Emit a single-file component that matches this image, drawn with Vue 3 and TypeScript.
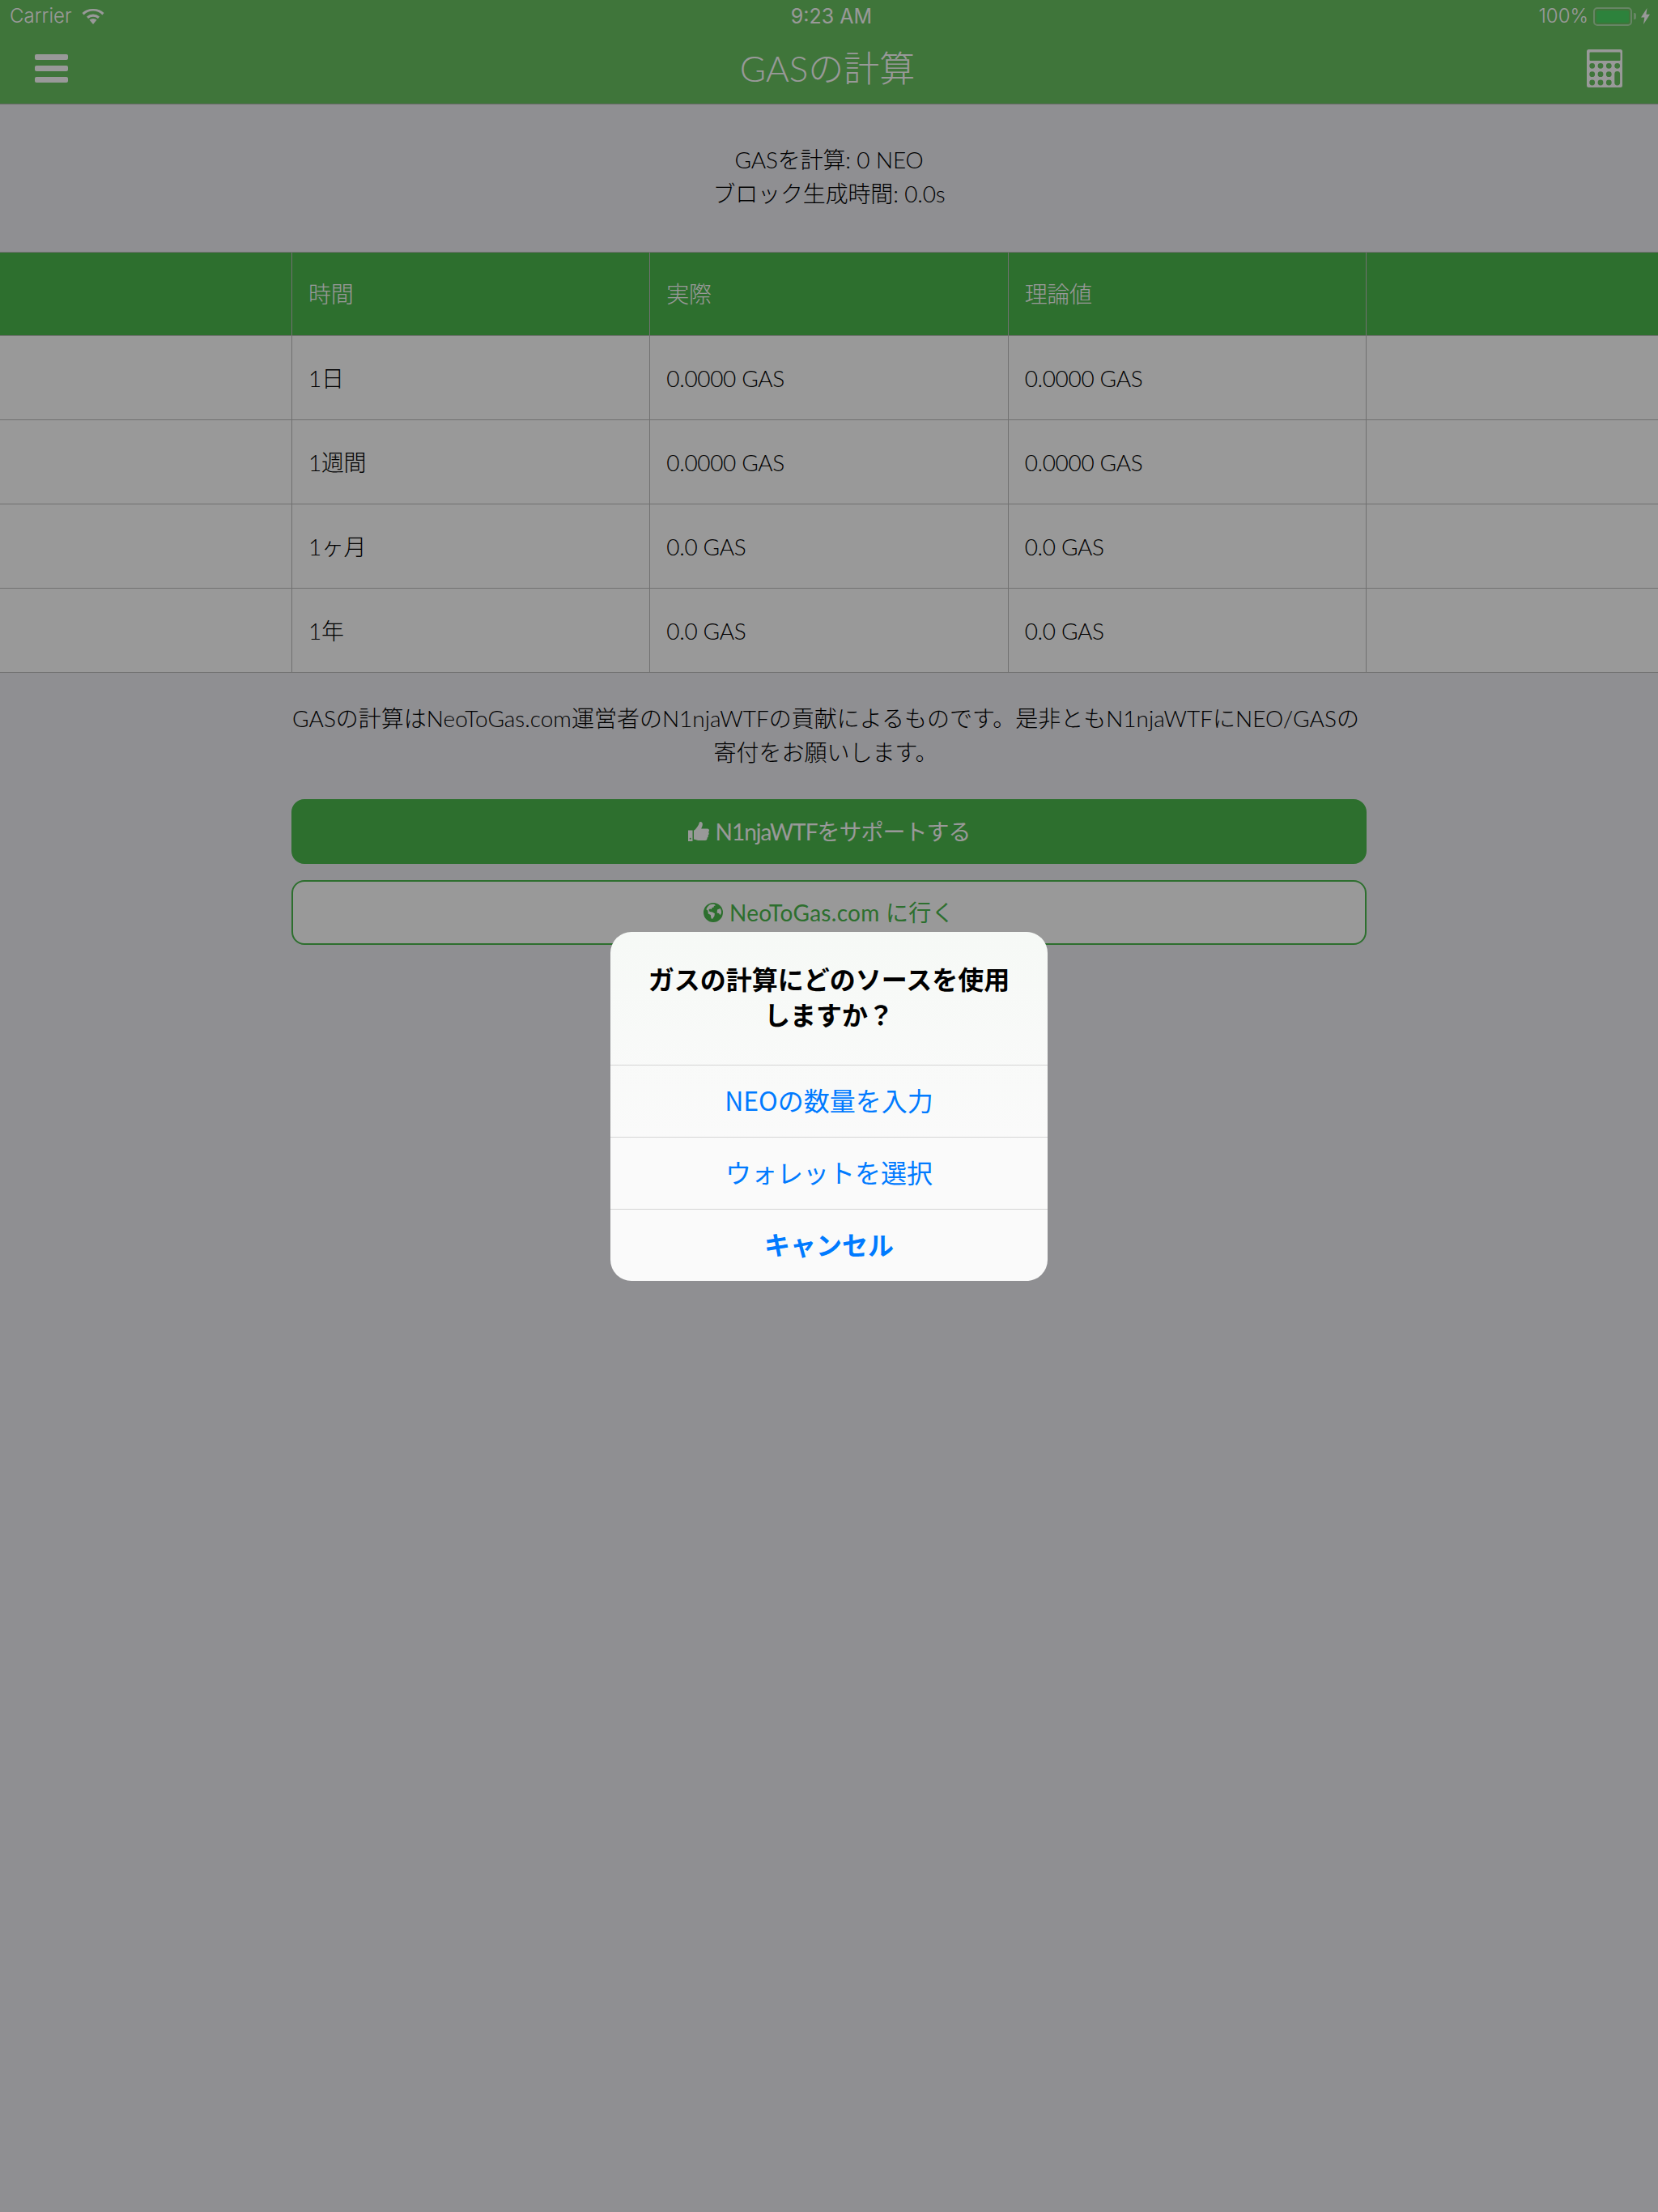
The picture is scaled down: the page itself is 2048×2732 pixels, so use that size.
<script setup lang="ts">
const rows = [
  { time: '1日', actual: '0.0000 GAS', theory: '0.0000 GAS' },
  { time: '1週間', actual: '0.0000 GAS', theory: '0.0000 GAS' },
  { time: '1ヶ月', actual: '0.0 GAS', theory: '0.0 GAS' },
  { time: '1年', actual: '0.0 GAS', theory: '0.0 GAS' }
]

const dotCols = [6.7, 17, 27.3, 37.7]
const dotRows = [20.3, 30.7, 41]

function dot(cx: number, cy: number) {
  const r = 3.4
  return `M${cx - r} ${cy}a${r} ${r} 0 1 0 ${r * 2} 0a${r} ${r} 0 1 0 ${-r * 2} 0z`
}

// body of the calculator with the screen, keys and tall key punched out
const calcPath = (() => {
  let d = 'M2.5 0h39a2.5 2.5 0 0 1 2.5 2.5v42a2.5 2.5 0 0 1-2.5 2.5h-39a2.5 2.5 0 0 1-2.5-2.5v-42a2.5 2.5 0 0 1 2.5-2.5z'
  d += 'M4.5 3.5a1 1 0 0 0-1 1v8.5a1 1 0 0 0 1 1h36a1 1 0 0 0 1-1v-8.5a1 1 0 0 0-1-1z'
  dotRows.forEach((y, ri) => {
    dotCols.forEach((x, ci) => {
      if (ci === 3 && ri > 0) return
      d += dot(x, y)
    })
  })
  d += 'M37.7 27a3.4 3.4 0 0 0-3.4 3.4v10.6a3.4 3.4 0 0 0 6.8 0v-10.6a3.4 3.4 0 0 0-3.4-3.4z'
  return d
})()
</script>

<template>
  <div class="page">
    <header class="top">
      <div class="status">
        <div class="status-left">
          <span>Carrier</span>
          <svg class="wifi" viewBox="0 0 28 20">
            <path d="M14 20l-4.6-5.4a7 7 0 0 1 9.200 0z" />
            <path d="M14 7.600a12.400 12.400 0 0 0-8 3l2 2.300a9.400 9.400 0 0 1 12 0l2-2.300a12.400 12.400 0 0 0-8-3z" />
            <path d="M14 1a19 19 0 0 0-13.500 5l2.100 2.400a15.800 15.800 0 0 1 22.800 0l2.100-2.400A19 19 0 0 0 14 1z" />
          </svg>
        </div>
        <span class="clock">9:23 AM</span>
        <div class="status-right">
          <span>100%</span>
          <div class="battery"><div class="battery-fill"></div></div>
          <div class="battery-nub"></div>
          <svg class="bolt" viewBox="0 0 11 20">
            <path d="M7.500 0L0 11.500h4.300L3 20l8-12.200H6.400z" />
          </svg>
        </div>
      </div>
      <nav class="nav">
        <button class="nav-btn" type="button" aria-label="menu">
          <span class="bar"></span>
          <span class="bar"></span>
          <span class="bar"></span>
        </button>
        <h1 class="nav-title">GASの計算</h1>
        <svg class="calc" viewBox="0 0 44 47">
          <path fill-rule="evenodd" :d="calcPath" />
        </svg>
      </nav>
    </header>

    <section class="summary">
      <div>GASを計算: 0 NEO</div>
      <div>ブロック生成時間: 0.0s</div>
    </section>

    <section class="table">
      <div class="row row-head">
        <div class="side"></div>
        <div class="cell">時間</div>
        <div class="cell">実際</div>
        <div class="cell">理論値</div>
        <div class="side side-end"></div>
      </div>
      <div class="row" v-for="r in rows" :key="r.time">
        <div class="side"></div>
        <div class="cell">{{ r.time }}</div>
        <div class="cell">{{ r.actual }}</div>
        <div class="cell">{{ r.theory }}</div>
        <div class="side side-end"></div>
      </div>
    </section>

    <section class="credit">
      <p>GASの計算はNeoToGas.com運営者のN1njaWTFの貢献によるものです。是非ともN1njaWTFにNEO/GASの寄付をお願いします。</p>
      <button class="btn btn-solid" type="button">
        <svg class="btn-icon" viewBox="0 0 26 24">
          <path d="M0 10.500h5.500V24H0zM7 10.800c2.500-1.600 4.600-4.500 6-7.300.6-1.300.5-3.500 2.200-3.500 2.800 0 3 3 2.300 5.200-.3 1-.9 2-1.300 3.300h7.600c1.300 0 2.200 1 2.200 2.200 0 .9-.4 1.500-1 2 .5.500.7 1.100.7 1.800 0 .9-.5 1.600-1.200 2 .2.400.3.800.3 1.200 0 1-.6 1.700-1.400 2 .1.300.2.600.2.900 0 1.300-1 2.400-2.600 2.400H14c-2.500 0-4.500-1-7-1.600z" />
          <circle cx="2.700" cy="20.800" r="1" fill="#4bb94d" />
        </svg>
        <span>N1njaWTFをサポートする</span>
      </button>
      <button class="btn btn-line" type="button">
        <svg class="btn-icon globe" viewBox="0 0 24 24">
          <path fill-rule="evenodd" d="M12 0a12 12 0 1 0 0 24a12 12 0 1 0 0-24zM7.500 2.500c1.500-.6 4-1 6-.6l1.500 1.400-2 .8-.6 1.600-2 .4-.3 2-2.200-.6-1.600 1.200 1.400 2.300 3.200.4 3 1.800-.5 3.200-2.400 3.600-1.500-.7-.7-4.200-3-1.700-.4-3.600-2-1.500c.7-2.800 2.300-4.200 4.200-5.800zM17 8.600l3.700-1.700c1 1.600 1.400 3.300 1.300 5.600l-1.400 2.700-1.600-2.200-2.400-.6z" />
        </svg>
        <span>NeoToGas.com に行く</span>
      </button>
    </section>

    <div class="dim">
      <div class="alert">
        <div class="alert-title">ガスの計算にどのソースを使用しますか？</div>
        <button class="alert-action" type="button">NEOの数量を入力</button>
        <button class="alert-action" type="button">ウォレットを選択</button>
        <button class="alert-action alert-cancel" type="button">キャンセル</button>
      </div>
    </div>
  </div>
</template>

<style scoped>
.page {
  position: relative;
  min-height: 2732px;
  background: #efeff4;
  color: #000;
  font-family: Lato, "Noto Sans CJK JP", sans-serif;
  font-weight: 300;
  font-size: 28px;
  line-height: 42px;
  overflow: hidden;
}
.top {
  background: #69c361;
  border-bottom: 1px solid #b0b0b0;
  color: #fff;
}
.status {
  height: 40px;
  display: flex;
  align-items: center;
  justify-content: space-between;
  position: relative;
  font-family: Inter, "Noto Sans", sans-serif;
  font-weight: 300;
  font-size: 24px;
  line-height: 40px;
  padding: 0 10px 0 12px;
}
.status-left,
.status-right {
  display: flex;
  align-items: center;
}
.wifi {
  width: 28px;
  height: 20px;
  margin-left: 12px;
  fill: #fff;
}
.clock {
  position: absolute;
  left: 6px;
  right: 0;
  text-align: center;
  font-size: 25px;
  font-weight: 400;
}
.battery {
  width: 48px;
  height: 23px;
  margin-left: 6px;
  border: 2px solid rgba(255, 255, 255, 0.45);
  border-radius: 5px;
  padding: 2px;
  box-sizing: border-box;
}
.battery-fill {
  height: 100%;
  background: #4cd964;
  border-radius: 2px;
}
.battery-nub {
  width: 3px;
  height: 8px;
  margin-left: 2px;
  background: rgba(255, 255, 255, 0.45);
  border-radius: 0 2px 2px 0;
}
.bolt {
  width: 11px;
  height: 20px;
  margin-left: 6px;
  fill: #fff;
}
.nav {
  height: 88px;
  display: flex;
  align-items: center;
  justify-content: space-between;
  padding: 0 44px 0 43px;
}
.nav-btn {
  width: 41px;
  display: flex;
  flex-direction: column;
  gap: 7px;
  padding: 0;
  background: none;
  border: 0;
}
.bar {
  display: block;
  height: 7px;
  background: #fff;
  border-radius: 2px;
}
.nav-title {
  margin: 0;
  font-size: 44px;
  line-height: 50px;
  font-weight: 300;
  color: #fff;
}
.calc {
  width: 44px;
  height: 47px;
  fill: #fff;
}
.summary {
  text-align: center;
  padding-top: 47px;
  height: 182px;
  box-sizing: border-box;
  letter-spacing: -0.15px;
}
.table {
  border-top: 1px solid #bdbdbd;
}
.row {
  display: grid;
  grid-template-columns: 360px repeat(3, 442.33px) 1fr;
  height: 104px;
  background: #fff;
  border-bottom: 1px solid #bdbdbd;
  box-sizing: border-box;
}
.row-head {
  background: #4bb94d;
  color: #fff;
  height: 103px;
}
.cell {
  display: flex;
  align-items: center;
  padding-left: 20px;
  border-left: 1px solid #bdbdbd;
  letter-spacing: -0.35px;
}
.side-end {
  border-left: 1px solid #bdbdbd;
}
.credit {
  width: 1328px;
  margin: 0 auto;
  padding-top: 35px;
  display: flex;
  flex-direction: column;
}
.credit p {
  margin: 0 4px 37px -4px;
  text-align: center;
}
.btn {
  height: 80px;
  display: flex;
  align-items: center;
  justify-content: center;
  gap: 8px;
  border-radius: 16px;
  font: inherit;
  font-weight: 400;
  letter-spacing: 0.3px;
  box-sizing: border-box;
}
.btn-solid {
  background: #4bb94d;
  border: 2px solid #4bb94d;
  color: #fff;
  margin-bottom: 20px;
  letter-spacing: -1px;
}
.btn-line {
  background: #fff;
  border: 2px solid #4bb94d;
  color: #4bb94d;
}
.btn-icon {
  width: 26px;
  height: 24px;
  fill: #fff;
}
.globe {
  width: 24px;
  fill: #4bb94d;
}
.dim {
  position: absolute;
  inset: 0;
  background: rgba(0, 0, 0, 0.4);
  display: flex;
  align-items: center;
  justify-content: center;
}
.alert {
  width: 540px;
  height: 431px;
  background: linear-gradient(#f6f9f6, #fafafa 60%);
  border-radius: 26px;
  overflow: hidden;
  display: flex;
  flex-direction: column;
  font-family: "Noto Sans CJK JP", Inter, sans-serif;
}
.alert-title {
  height: 164px;
  box-sizing: border-box;
  padding: 35px 40px 0;
  font-size: 32px;
  line-height: 44px;
  font-weight: 700;
  text-align: center;
  color: #000;
}
.alert-action {
  flex: 1;
  background: none;
  border: 0;
  border-top: 1px solid #d5d5d5;
  padding: 0 0 3px;
  font-family: inherit;
  font-size: 32px;
  font-weight: 400;
  color: #007aff;
}
.alert-cancel {
  font-weight: 700;
}
</style>
